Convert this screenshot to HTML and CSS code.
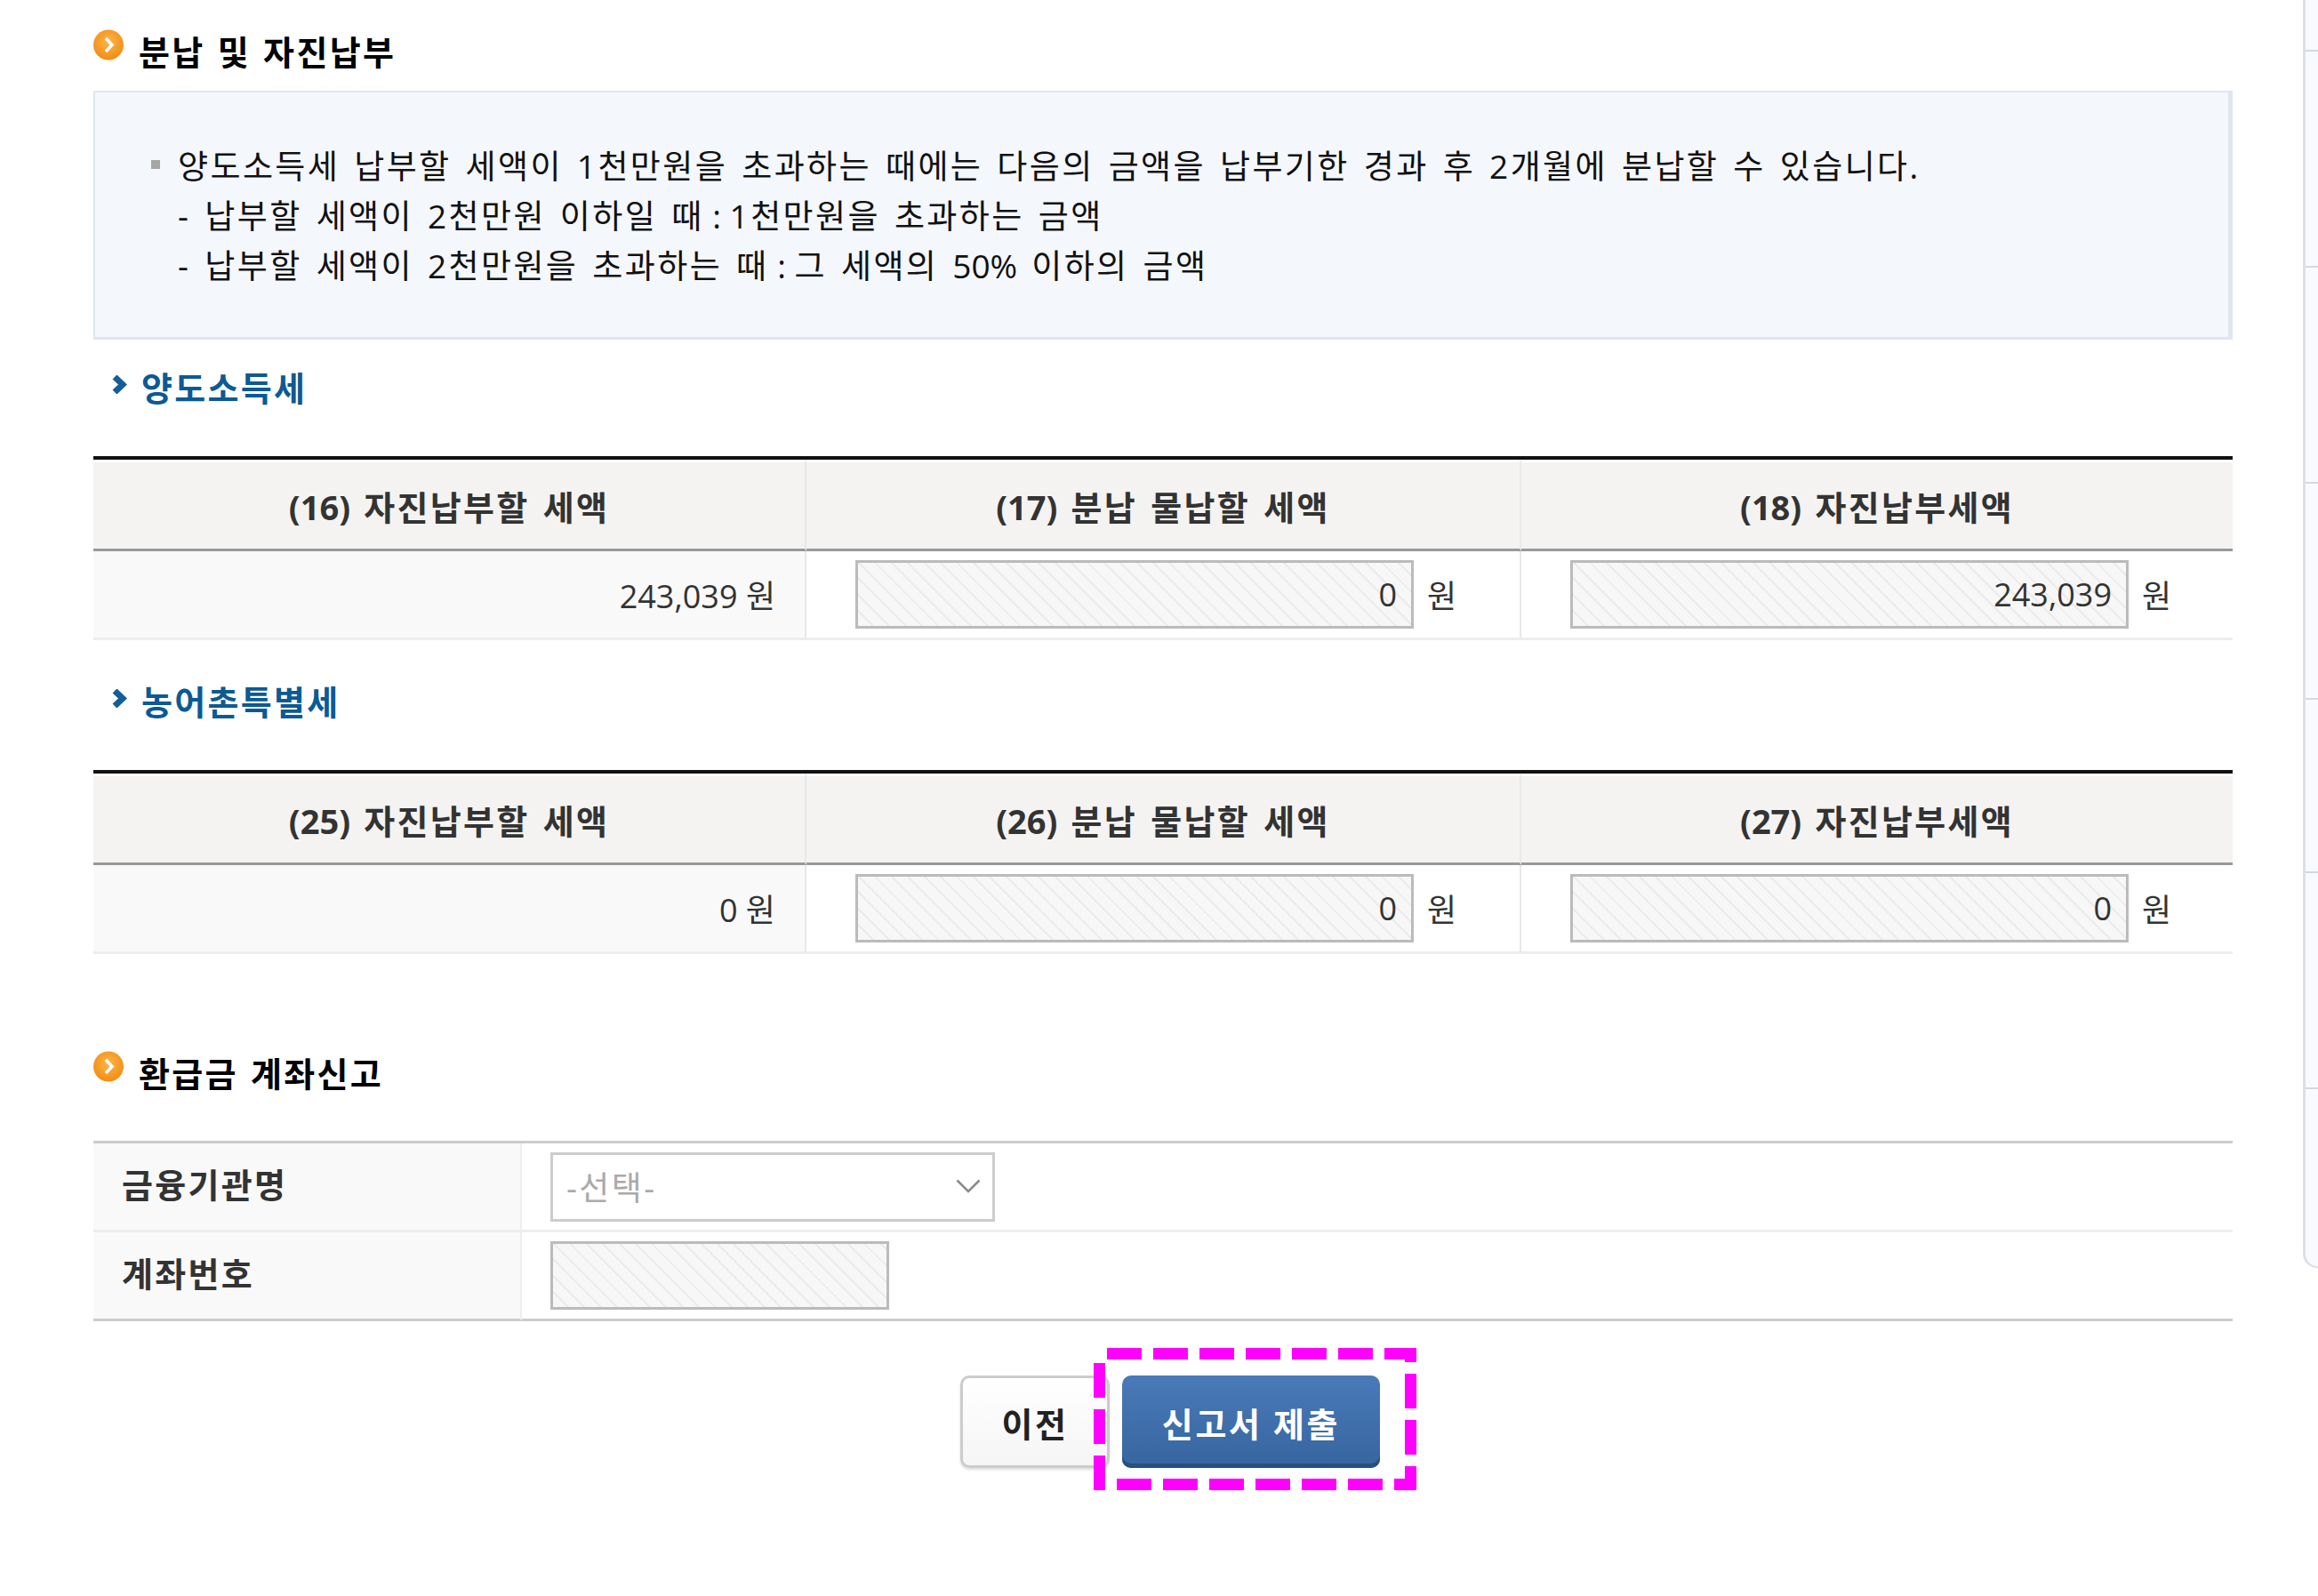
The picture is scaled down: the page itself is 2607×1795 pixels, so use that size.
FILE: index.html
```html
<!DOCTYPE html>
<html lang="ko">
<head>
<meta charset="utf-8">
<title>분납 및 자진납부</title>
<link rel="stylesheet" href="styles.css">
</head>
<body>
<main class="main">
  <h2 class="title">
    <svg class="title-icon" viewBox="0 0 34 35"><defs><radialGradient id="o1" cx="50%" cy="40%" r="60%"><stop offset="0" stop-color="#fcb54a"/><stop offset="1" stop-color="#f28c14"/></radialGradient></defs><circle cx="17" cy="17.5" r="17" fill="url(#o1)"/><path d="M14 10l7 7.500-7 7.500" fill="none" stroke="#fff" stroke-width="3.500"/></svg>
    <span>분납 및 자진납부</span>
  </h2>
  <div class="notice">
    <i class="bullet"></i>
    <div>
      <p class="notice-line">양도소득세 납부할 세액이 1천만원을 초과하는 때에는 다음의 금액을 납부기한 경과 후 2개월에 분납할 수 있습니다.</p>
      <p class="notice-line">- 납부할 세액이 2천만원 이하일 때<span class="sep"> : </span>1천만원을 초과하는 금액</p>
      <p class="notice-line">- 납부할 세액이 2천만원을 초과하는 때<span class="sep"> : </span>그 세액의 <span class="latin">50%</span> 이하의 금액</p>
    </div>
  </div>

  <h3 class="sub sub-first">
    <svg class="sub-icon" viewBox="0 0 17 21"><path d="M3 2l9 8.500-9 8.500" fill="none" stroke="#135e96" stroke-width="7"/></svg>
    <span>양도소득세</span>
  </h3>
  <table class="tax">
    <thead><tr><th class="c1"><span class="latin">(16)</span> 자진납부할 세액</th><th class="c2"><span class="latin">(17)</span> 분납 물납할 세액</th><th><span class="latin">(18)</span> 자진납부세액</th></tr></thead>
    <tbody><tr>
      <td class="amount">243,039 원</td>
      <td><div class="field"><div class="hatch num">0</div><span>원</span></div></td>
      <td><div class="field"><div class="hatch num">243,039</div><span>원</span></div></td>
    </tr></tbody>
  </table>

  <h3 class="sub">
    <svg class="sub-icon" viewBox="0 0 17 21"><path d="M3 2l9 8.500-9 8.500" fill="none" stroke="#135e96" stroke-width="7"/></svg>
    <span>농어촌특별세</span>
  </h3>
  <table class="tax">
    <thead><tr><th class="c1"><span class="latin">(25)</span> 자진납부할 세액</th><th class="c2"><span class="latin">(26)</span> 분납 물납할 세액</th><th><span class="latin">(27)</span> 자진납부세액</th></tr></thead>
    <tbody><tr>
      <td class="amount">0 원</td>
      <td><div class="field"><div class="hatch num">0</div><span>원</span></div></td>
      <td><div class="field"><div class="hatch num">0</div><span>원</span></div></td>
    </tr></tbody>
  </table>

  <h2 class="title title-refund">
    <svg class="title-icon" viewBox="0 0 34 35"><circle cx="17" cy="17.5" r="17" fill="url(#o1)"/><path d="M14 10l7 7.500-7 7.500" fill="none" stroke="#fff" stroke-width="3.500"/></svg>
    <span>환급금 계좌신고</span>
  </h2>
  <table class="account">
    <tbody>
      <tr><th>금융기관명</th><td><div class="select"><span>-선택-</span><svg class="chevron" viewBox="0 0 28 16"><path d="M1.500 1.500L14 14 26.500 1.500" fill="none" stroke="#8a8a8a" stroke-width="2.500"/></svg></div></td></tr>
      <tr><th>계좌번호</th><td><div class="hatch short"></div></td></tr>
    </tbody>
  </table>

  <div class="actions">
    <button class="btn btn-prev" type="button">이전</button>
    <button class="btn btn-submit" type="button">신고서 제출</button>
    <svg class="highlight" viewBox="0 0 363 160"><path d="M15 6.500H356.500V153.500H6.500V6.500" fill="none" stroke="#ff00ff" stroke-width="13" stroke-dasharray="39 13"/></svg>
  </div>
</main>
<aside class="side">
  <div class="side-row r1"></div><div class="side-row r2"></div><div class="side-row r2"></div><div class="side-row r2"></div><div class="side-row r3"></div><div class="side-row r2"></div><div class="side-row r4"></div>
</aside>
</body>
</html>
```
FILE: styles.css
```css
* { box-sizing: border-box; }
html, body { margin: 0; padding: 0; background: #fff; }
body {
  display: flex;
  align-items: flex-start;
  min-height: 1795px;
  font-family: "Open Sans", "Noto Sans CJK KR", sans-serif;
  font-size: 36px;
  color: #222;
}
.main { width: 2511px; flex: none; min-height: 1795px; padding: 33px 0 0 105px; }
.latin { letter-spacing: 0; }

.title { display: flex; gap: 17px; margin: 0 0 15px; height: 54px; font-size: 38px; font-weight: 700; line-height: 50px; letter-spacing: 2.3px; word-spacing: 2px; color: #000; }
.title-icon { width: 34px; height: 35px; flex: none; }
.title-refund { margin: 109px 0 47px; }

.notice {
  display: flex;
  gap: 20px;
  height: 280px;
  padding: 55px 0 0 63px;
  background: #f4f7fc;
  border: solid #e0e6ef;
  border-width: 2px 5px 3px 2px;
}
.bullet { width: 10px; height: 10px; flex: none; margin-top: 21px; background: #a6a6a6; }
.notice-line { margin: 0; font-size: 37px; line-height: 56px; letter-spacing: 2.4px; word-spacing: 4px; color: #111; white-space: nowrap; }
.sep { letter-spacing: 0; word-spacing: 0; }

.sub { display: flex; align-items: center; gap: 16px; height: 50px; margin: 44px 0 52px; padding-left: 21px; font-size: 38px; font-weight: 700; line-height: 50px; letter-spacing: 2.3px; color: #0b5a94; }
.sub-first { margin-top: 29px; }
.sub-icon { width: 17px; height: 21px; flex: none; margin-top: -8px; }

.tax { width: 2406px; table-layout: fixed; border-collapse: separate; border-spacing: 0; border-top: 4px solid #111; }
.tax th { height: 103px; padding: 0; background: #f4f3f2; border-top: 3px solid #fff; border-bottom: 3px solid #999; border-right: 2px solid #e8e8e8; font-size: 38px; font-weight: 700; letter-spacing: 2.3px; word-spacing: 3px; color: #333; }
.tax .c1 { width: 802px; }
.tax .c2 { width: 804px; }
.tax td { height: 100px; padding: 0; border-bottom: 3px solid #eee; border-right: 2px solid #e8e8e8; color: #333; }
.tax th:last-child, .tax td:last-child { border-right: 0; }
.tax .amount { padding-right: 33px; text-align: right; background: #f9f9f9; }

.field { display: flex; align-items: center; gap: 15px; padding-left: 55px; }
.hatch {
  background: repeating-linear-gradient(45deg, #f7f7f7 0, #f7f7f7 11px, #ebebeb 11px, #ebebeb 13px);
  border: 3px solid #bbb;
  height: 77px;
}
.num { width: 628px; padding-right: 16px; text-align: right; line-height: 71px; }

.account { width: 2406px; table-layout: fixed; border-collapse: separate; border-spacing: 0; border-top: 3px solid #ccc; }
.account th { width: 482px; height: 100px; padding: 0 0 8px 32px; text-align: left; background: #f9f9f9; border-right: 2px solid #eee; border-bottom: 3px solid #eee; font-size: 38px; font-weight: 700; letter-spacing: 2.3px; color: #333; }
.account td { height: 100px; padding: 0 0 0 32px; border-bottom: 3px solid #eee; }
.account tr:last-child th, .account tr:last-child td { border-bottom-color: #ccc; }
.select { display: flex; align-items: center; justify-content: space-between; width: 500px; height: 78px; padding: 0 13px 2px 15px; border: 3px solid #ccc; color: #aaa; font-size: 37px; letter-spacing: 2.4px; }
.chevron { width: 28px; height: 16px; }
.short { width: 381px; }

.actions { position: relative; display: flex; justify-content: center; gap: 14px; margin-top: 61px; padding-left: 16px; }
.btn { height: 104px; padding: 0; border-radius: 10px; font-family: inherit; font-size: 38px; font-weight: 700; letter-spacing: 2.6px; }
.btn-prev { width: 168px; border: 3px solid #ccc; background: linear-gradient(#fff, #f5f5f5); color: #222; box-shadow: 0 2px 3px #ddd; }
.btn-submit { width: 290px; border: 0; background: linear-gradient(#4a7ab8, #36659f); color: #fff; box-shadow: inset 0 -5px 0 #27507f; }
.highlight { position: absolute; left: 1125px; top: -31px; width: 363px; height: 160px; overflow: visible; }

.side { flex: none; width: 17px; margin-left: 79px; height: 1426px; background: #f9fafe; border-left: 3px solid #dcdfe3; border-bottom: 2px solid #dcdfe3; border-bottom-left-radius: 16px; overflow: hidden; }
.side-row { border-bottom: 2px solid #d5d9df; }
.side-row.r1 { height: 58px; }
.side-row.r2 { height: 243px; }
.side-row.r3 { height: 195px; }
.side-row.r4 { height: 195px; border-bottom: 0; }
```
